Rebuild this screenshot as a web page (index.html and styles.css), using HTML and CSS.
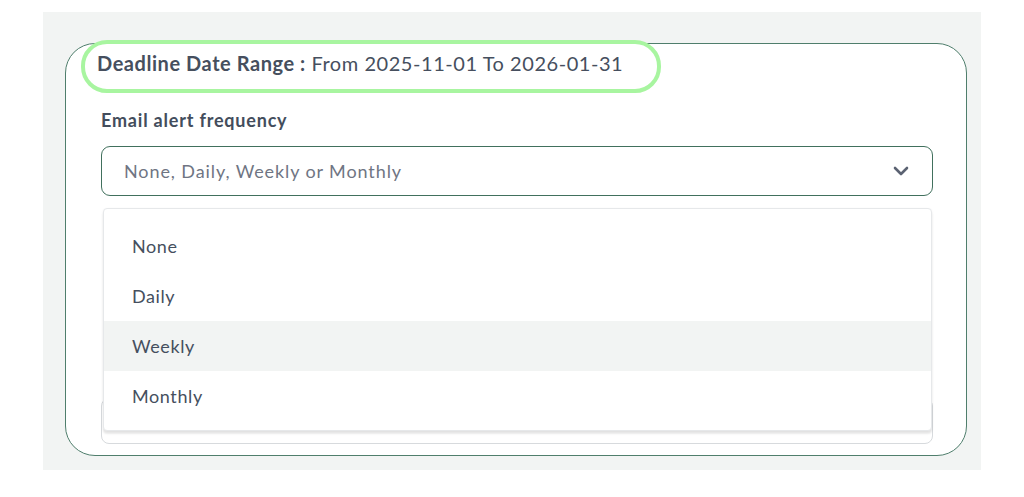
FILE: index.html
```html
<!DOCTYPE html>
<html lang="en">
<head>
<meta charset="utf-8">
<title>Email alert frequency</title>
<link rel="stylesheet" href="styles.css">
</head>
<body>
<div class="stage">
  <div class="card">
    <div class="highlight"></div>
    <div class="title"><span class="title-key">Deadline Date Range :</span> From 2025-11-01 To 2026-01-31</div>
    <div class="field">
      <div class="label">Email alert frequency</div>
      <div class="select">
        <span class="placeholder">None, Daily, Weekly or Monthly</span>
        <svg class="chevron" width="18" height="12" viewBox="0 0 18 12"><polyline points="3,3 9,9 15,3" fill="none" stroke="#5b6272" stroke-width="2.6" stroke-linecap="round" stroke-linejoin="round"/></svg>
      </div>
      <div class="menu">
        <div class="option">None</div>
        <div class="option">Daily</div>
        <div class="option active">Weekly</div>
        <div class="option">Monthly</div>
      </div>
    </div>
    <div class="input-under"></div>
  </div>
</div>
</body>
</html>
```
FILE: styles.css
```css
* { box-sizing: border-box; }
html, body { margin: 0; padding: 0; background: #ffffff; }
body {
  font-family: Lato, "Open Sans", sans-serif;
  color: #434d5c;
  width: 1024px;
  height: 497px;
  overflow: hidden;
}
.stage {
  margin: 12px 0 0 43px;
  width: 938px;
  height: 458px;
  background: #f2f4f3;
  padding: 31px 14px 14px 22px;
}
.card {
  position: relative;
  width: 902px;
  height: 413px;
  background: #ffffff;
  border: 1px solid #4f7e6c;
  border-radius: 30px;
  padding: 5px 33px 0 35px;
}
.highlight {
  position: absolute;
  left: 15px;
  top: -4px;
  width: 580px;
  height: 53px;
  border: 4px solid #a8f5a0;
  border-radius: 26px;
  pointer-events: none;
}
.title {
  margin-left: -4px;
  font-size: 20px;
  line-height: 28px;
  font-weight: 400;
  letter-spacing: 0.55px;
  color: #464f5e;
}
.title-key { font-weight: 700; }
.field { position: relative; }
.label {
  margin-top: 31px;
  font-size: 18px;
  line-height: 24px;
  font-weight: 700;
  letter-spacing: 0.8px;
  color: #434d5c;
}
.select {
  margin-top: 14px;
  height: 50px;
  border: 1.5px solid #41705d;
  border-radius: 9px;
  display: flex;
  align-items: center;
  justify-content: space-between;
  padding: 0 22px 0 22px;
}
.placeholder {
  font-size: 18px;
  letter-spacing: 0.9px;
  color: #6f7583;
}
.chevron { display: block; }
.menu {
  position: absolute;
  left: 2px;
  right: 1px;
  top: 100px;
  height: 223px;
  background: #ffffff;
  border: 1px solid #e6e8ea;
  border-radius: 4px;
  box-shadow: 0 3px 2px rgba(0,0,0,0.08), 0 1px 3px rgba(0,0,0,0.06);
  padding: 12px 0 9px 0;
  z-index: 2;
}
.option {
  height: 50px;
  display: flex;
  align-items: center;
  padding-left: 28px;
  font-size: 18px;
  letter-spacing: 0.6px;
  color: #454f5e;
}
.option.active { background: #f2f4f3; }
.input-under {
  margin-top: 202px;
  height: 46px;
  border: 1px solid #d7dadd;
  border-radius: 8px;
}
```
